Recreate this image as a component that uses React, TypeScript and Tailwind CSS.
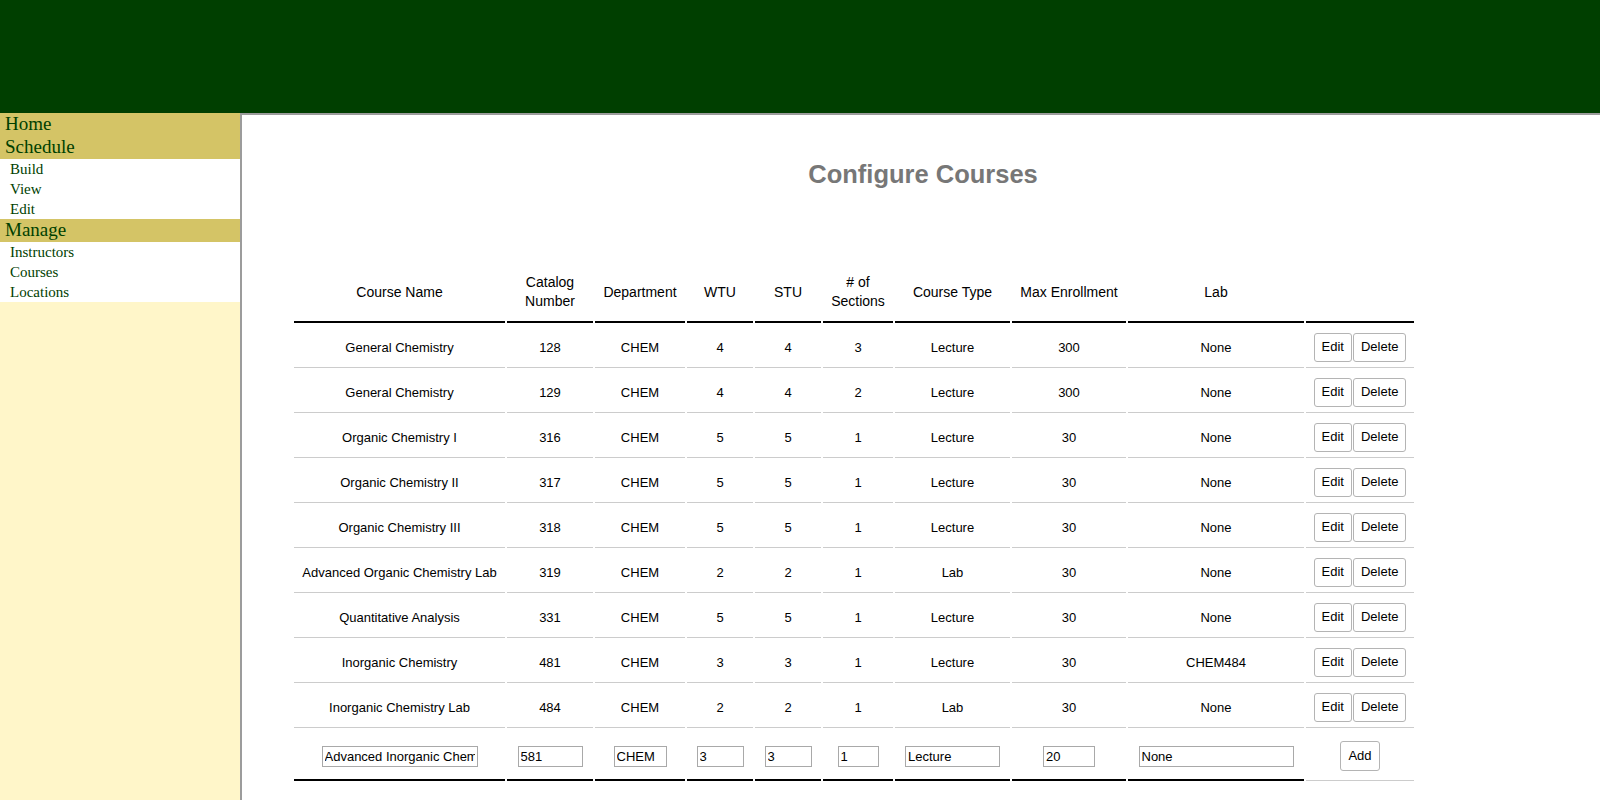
import React from "react";

const rows: string[][] = [
  ["General Chemistry", "128", "CHEM", "4", "4", "3", "Lecture", "300", "None"],
  ["General Chemistry", "129", "CHEM", "4", "4", "2", "Lecture", "300", "None"],
  ["Organic Chemistry I", "316", "CHEM", "5", "5", "1", "Lecture", "30", "None"],
  ["Organic Chemistry II", "317", "CHEM", "5", "5", "1", "Lecture", "30", "None"],
  ["Organic Chemistry III", "318", "CHEM", "5", "5", "1", "Lecture", "30", "None"],
  ["Advanced Organic Chemistry Lab", "319", "CHEM", "2", "2", "1", "Lab", "30", "None"],
  ["Quantitative Analysis", "331", "CHEM", "5", "5", "1", "Lecture", "30", "None"],
  ["Inorganic Chemistry", "481", "CHEM", "3", "3", "1", "Lecture", "30", "CHEM484"],
  ["Inorganic Chemistry Lab", "484", "CHEM", "2", "2", "1", "Lab", "30", "None"],
];

const headers: { label: React.ReactNode; w: string }[] = [
  { label: "Course Name", w: "w-[211px]" },
  { label: <>Catalog<br />Number</>, w: "w-[86px]" },
  { label: "Department", w: "w-[90px]" },
  { label: "WTU", w: "w-[66px]" },
  { label: "STU", w: "w-[66px]" },
  { label: <># of<br />Sections</>, w: "w-[70px]" },
  { label: "Course Type", w: "w-[115px]" },
  { label: "Max Enrollment", w: "w-[114px]" },
  { label: "Lab", w: "w-[176px]" },
  { label: "", w: "w-[108px]" },
];

const inputs: { v: string; w: string }[] = [
  { v: "Advanced Inorganic Chem", w: "w-[156px]" },
  { v: "581", w: "w-[65px]" },
  { v: "CHEM", w: "w-[53px]" },
  { v: "3", w: "w-[47px]" },
  { v: "3", w: "w-[47px]" },
  { v: "1", w: "w-[41px]" },
  { v: "Lecture", w: "w-[95px]" },
  { v: "20", w: "w-[52px]" },
  { v: "None", w: "w-[155px]" },
];

function SideTop({ children }: { children: React.ReactNode }) {
  return (
    <div className="h-[23px] leading-[22px] bg-[#d4c466] pl-[5px] text-[19px] text-[#004000]">
      {children}
    </div>
  );
}

function SideSub({ children }: { children: React.ReactNode }) {
  return (
    <div className="h-[20px] leading-[20px] bg-white pl-[10px] text-[15px] text-[#004000]">
      {children}
    </div>
  );
}

const btn =
  "h-[29px] bg-white border border-[#b4b4b4] rounded-[3px] text-[13px] text-black px-[7px] font-['Liberation_Sans',Arial,sans-serif]";

export default function App() {
  return (
    <div className="h-screen flex flex-col overflow-hidden font-['Liberation_Sans',Arial,sans-serif]">
      <div className="h-[113px] shrink-0 bg-[#003f00]" />
      <div className="flex flex-1 min-h-0">
        <div className="w-[240px] shrink-0 bg-[#fff6c9] font-['Liberation_Serif','Times_New_Roman',serif]">
          <SideTop>Home</SideTop>
          <SideTop>Schedule</SideTop>
          <SideSub>Build</SideSub>
          <SideSub>View</SideSub>
          <SideSub>Edit</SideSub>
          <SideTop>Manage</SideTop>
          <SideSub>Instructors</SideSub>
          <SideSub>Courses</SideSub>
          <SideSub>Locations</SideSub>
        </div>
        <div className="flex-1 bg-white border-l-2 border-t-2 border-[#9c9c9c]">
          <h1 className="mt-[44px] h-[30px] leading-[30px] text-center text-[25.5px] font-bold text-[#777777] pl-[4px]">
            Configure Courses
          </h1>
          <table className="mt-[72px] ml-[50px] table-fixed w-[1124px] border-separate border-spacing-[2px] text-black">
            <thead>
              <tr>
                {headers.map((h, i) => (
                  <th
                    key={i}
                    className={`${h.w} h-[60px] p-0 align-middle text-center text-[14px] leading-[19px] font-normal border-b-2 border-black`}
                  >
                    {h.label}
                  </th>
                ))}
              </tr>
            </thead>
            <tbody>
              {rows.map((r, ri) => (
                <tr key={ri}>
                  {r.map((c, ci) => (
                    <td
                      key={ci}
                      className="h-[43px] p-0 pt-[4px] align-middle text-center text-[13px] border-b border-[#cccccc]"
                    >
                      {c}
                    </td>
                  ))}
                  <td className="h-[43px] p-0 pt-[2px] align-middle text-center border-b border-[#cccccc]">
                    <div className="flex justify-center gap-px">
                      <button className={btn}>Edit</button>
                      <button className={btn}>Delete</button>
                    </div>
                  </td>
                </tr>
              ))}
              <tr>
                {inputs.map((inp, i) => (
                  <td
                    key={i}
                    className="h-[51px] p-0 pt-[3px] align-middle text-center border-b-2 border-black"
                  >
                    <input
                      type="text"
                      defaultValue={inp.v}
                      className={`${inp.w} h-[21px] border border-[#a9a9a9] px-[2px] text-[13px] text-black bg-white outline-none`}
                    />
                  </td>
                ))}
                <td className="h-[51px] p-0 pt-[2px] align-middle text-center border-b border-[#cccccc]">
                  <button className={`${btn} h-[30px] px-[6px]`}>Add</button>
                </td>
              </tr>
            </tbody>
          </table>
        </div>
      </div>
    </div>
  );
}
